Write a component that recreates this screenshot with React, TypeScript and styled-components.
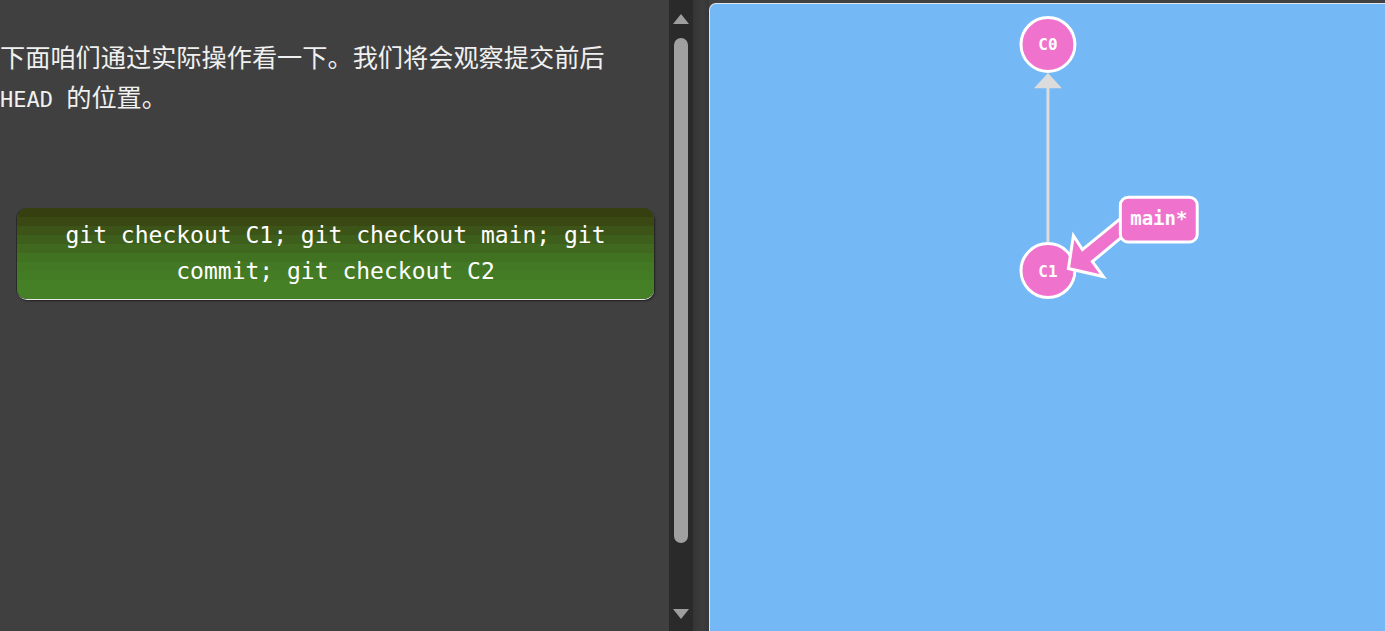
import React from "react";
import styled, { createGlobalStyle } from "styled-components";

const Global = createGlobalStyle`
  html, body { margin: 0; padding: 0; background: #404040; overflow: hidden; }
  #root { width: 1385px; height: 631px; }
`;

const Page = styled.div`
  display: flex;
  width: 1385px;
  height: 631px;
  background: #404040;
`;

const LeftPane = styled.div`
  width: 669px;
  flex: none;
  box-sizing: border-box;
  padding: 36px 15px 0 0;
  display: flex;
  flex-direction: column;
`;

const Para = styled.p`
  margin: 0;
  height: 80px;
  font-family: "Noto Sans CJK SC", sans-serif;
  font-size: 25.2px;
  line-height: 40px;
  color: #f0f0f0;
  width: 640px;
`;

const Code = styled.span`
  font-family: "DejaVu Sans Mono", monospace;
  font-size: 22px;
  line-height: 40px;
  white-space: pre;
`;

const Command = styled.div`
  margin: 92px 0 0 17px;
  height: 91px;
  box-sizing: border-box;
  padding: 9px 20px 0;
  border-radius: 10px;
  background: linear-gradient(
    to bottom,
    #363f10 0px, #363f10 9px,
    #3a4813 9px, #3a4813 18px,
    #3c5417 18px, #3c5417 27px,
    #3e5e1b 27px, #3e5e1b 36px,
    #40691f 36px, #40691f 45px,
    #417222 45px, #417222 54px,
    #437824 54px, #437824 63px,
    #447c25 63px, #447c25 72px,
    #457f26 72px
  );
  box-shadow: -1px 0 0 #2a2a2a, 0 1px 0 #e8e8e8, 1px 2px 2px rgba(0,0,0,0.5);
  font-family: "DejaVu Sans Mono", monospace;
  font-size: 23px;
  line-height: 36px;
  color: #ffffff;
  text-align: center;
`;

const ScrollTrack = styled.div`
  width: 24px;
  flex: none;
  background: #2a2a2a;
  display: flex;
  flex-direction: column;
  align-items: center;
  padding: 14px 0 12px;
  box-sizing: border-box;
`;

const Arrow = styled.div<{ $up?: boolean }>`
  width: 0;
  height: 0;
  border-left: 8px solid transparent;
  border-right: 8px solid transparent;
  ${(p) => (p.$up ? "border-bottom: 10px solid #9e9e9e;" : "border-top: 10px solid #9e9e9e;")}
  flex: none;
`;

const Thumb = styled.div`
  width: 14px;
  margin: 14px 0 66px;
  flex: 1;
  background: #a0a0a0;
  border-radius: 7px;
`;

const Gutter = styled.div`
  width: 16px;
  flex: none;
  background: linear-gradient(to right, #353535, #3d3d3d 60%, #363636);
`;

const Canvas = styled.div`
  flex: 1;
  margin-top: 3px;
  position: relative;
  background: #74b8f5;
  border-top-left-radius: 7px;
  border-top: 1px solid #dfe6ee;
  border-left: 1px solid #dfe6ee;
  box-sizing: border-box;
  overflow: hidden;
`;

const Graph = styled.svg`
  position: absolute;
  left: 0;
  top: 0;
  width: 100%;
  height: 100%;
`;

const NodeText = styled.text`
  font-family: "DejaVu Sans Mono", monospace;
  font-weight: bold;
  font-size: 16px;
  fill: #ffffff;
`;

const LabelText = styled.text`
  font-family: "DejaVu Sans Mono", monospace;
  font-weight: bold;
  font-size: 19px;
  fill: #ffffff;
`;

const PINK = "#ef73cd";

export default function App() {
  return (
    <>
      <Global />
      <Page>
        <LeftPane>
          <Para>
            下面咱们通过实际操作看一下。我们将会观察提交前后
            <br />
            <Code>HEAD </Code>的位置。
          </Para>
          <Command>git checkout C1; git checkout main; git commit; git checkout C2</Command>
        </LeftPane>
        <ScrollTrack>
          <Arrow $up />
          <Thumb />
          <Arrow />
        </ScrollTrack>
        <Gutter />
        <Canvas>
          <Graph viewBox="709 3 676 628" preserveAspectRatio="xMinYMin meet">
            <line x1="1047.5" y1="244" x2="1047.5" y2="86" stroke="#dcdcdc" strokeWidth="3" />
            <polygon points="1047.5,72 1061.5,87.5 1033.5,87.5" fill="#dcdcdc" />
            <circle cx="1047.5" cy="43.5" r="27" fill={PINK} stroke="#ffffff" strokeWidth="3" />
            <NodeText x="1047.5" y="49.5" textAnchor="middle">C0</NodeText>
            <circle cx="1047.5" cy="270" r="27" fill={PINK} stroke="#ffffff" strokeWidth="3" />
            <NodeText x="1047.5" y="276" textAnchor="middle">C1</NodeText>
            <polygon
              points="1068,268 1073,235 1082,249 1130,210 1140,221 1092,261 1103,276"
              fill={PINK}
              stroke="#ffffff"
              strokeWidth="3"
              strokeLinejoin="miter"
            />
            <rect x="1120" y="196.5" width="77" height="45" rx="8" fill={PINK} stroke="#ffffff" strokeWidth="3" />
            <LabelText x="1158.5" y="224.5" textAnchor="middle">main*</LabelText>
          </Graph>
        </Canvas>
      </Page>
    </>
  );
}
